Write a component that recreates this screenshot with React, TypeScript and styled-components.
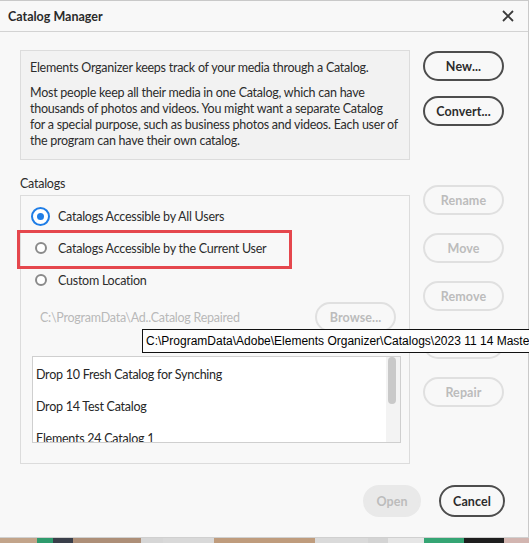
import React from "react";
import styled, { createGlobalStyle } from "styled-components";

const GlobalStyle = createGlobalStyle`
  html, body {
    margin: 0;
    padding: 0;
    overflow: hidden;
    background: #d4d4d4;
  }
  * {
    box-sizing: border-box;
  }
`;

const FONT = `Lato, "Open Sans", sans-serif`;

// Страница целиком
const Page = styled.div`
  position: relative;
  width: 529px;
  height: 543px;
  display: flex;
  flex-direction: column;
  overflow: hidden;
  font-family: ${FONT};
  font-size: 12.5px;
  letter-spacing: -0.25px;
  color: #2c2c2c;
`;

// Окно диалога
const Dialog = styled.div`
  height: 538px;
  background: #f8f8f8;
  border-top: 1px solid #c9c9c9;
  border-right: 1px solid #c9c9c9;
  border-bottom: 1px solid #d0d0d0;
  display: flex;
  flex-direction: column;
`;

const TitleBar = styled.div`
  height: 31px;
  flex: none;
  display: flex;
  align-items: center;
  justify-content: space-between;
  padding: 0 8px 0 8px;
  border-bottom: 1px solid #d3d3d3;
`;

const Title = styled.div`
  font-size: 12.5px;
  font-weight: 700;
  letter-spacing: 0;
  color: #2a2a2a;
`;

const CloseIcon = styled.svg`
  width: 12px;
  height: 12px;
  margin-right: 6px;
`;

const Body = styled.div`
  flex: 1;
  display: grid;
  grid-template-columns: 390px 81px;
  column-gap: 13px;
  padding: 18px 23px 0 20px;
`;

const LeftColumn = styled.div`
  display: flex;
  flex-direction: column;
`;

const RightColumn = styled.div`
  display: flex;
  flex-direction: column;
  padding-top: 1px;
`;

const InfoBox = styled.div`
  height: 110px;
  border: 1px solid #dcdcdc;
  background: #f2f2f2;
  padding: 9px 10px 0 9px;
  line-height: 16px;

  p {
    margin: 0 0 9px 0;
  }
`;

const SectionLabel = styled.div`
  margin-top: 16px;
  line-height: 16px;
`;

const GroupBox = styled.div`
  margin-top: 3px;
  height: 269px;
  border: 1px solid #dcdcdc;
  padding: 4px 9px 0 10px;
  display: flex;
  flex-direction: column;
`;

const RadioRow = styled.div`
  height: 32px;
  display: flex;
  align-items: center;
  gap: 8px;
`;

const RadioSlot = styled.div`
  width: 19px;
  display: flex;
  justify-content: center;
`;

const Radio = styled.span<{ $checked?: boolean }>`
  display: block;
  border-radius: 50%;
  background: #fff;
  ${({ $checked }) =>
    $checked
      ? `
    width: 19px;
    height: 19px;
    border: 2.5px solid #1f7de6;
    position: relative;
    &::after {
      content: "";
      position: absolute;
      left: 50%;
      top: 50%;
      width: 7px;
      height: 7px;
      margin: -3.5px 0 0 -3.5px;
      border-radius: 50%;
      background: #1f7de6;
    }
  `
      : `
    width: 12px;
    height: 12px;
    border: 2px solid #8a8a8a;
  `}
`;

// Красная рамка выделения
const Highlight = styled.div`
  position: absolute;
  left: 17px;
  top: 230px;
  width: 275px;
  height: 39px;
  border: 3px solid #e5474d;
  pointer-events: none;
`;

const PathRow = styled.div`
  margin-top: 6px;
  height: 30px;
  display: flex;
  align-items: center;
  justify-content: space-between;
  padding: 0 4px 0 9px;
`;

const PathText = styled.span`
  color: #b9b9b9;
`;

const Button = styled.button<{ $width?: number; $disabled?: boolean; $filled?: boolean }>`
  width: ${({ $width }) => $width ?? 81}px;
  height: ${({ $filled }) => ($filled ? 32 : 30)}px;
  flex: none;
  border-radius: 16px;
  font-family: ${FONT};
  font-size: 12.5px;
  font-weight: 700;
  letter-spacing: 0.1px;
  padding: 0;
  background: ${({ $filled }) => ($filled ? "#e9e9e9" : "transparent")};
  border: 2px solid
    ${({ $disabled, $filled }) =>
      $filled ? "#e9e9e9" : $disabled ? "#e0e0e0" : "#4d4d4d"};
  color: ${({ $disabled }) => ($disabled ? "#bcbcbc" : "#2c2c2c")};
`;

const ListBox = styled.div`
  margin: 24px 0 0 1px;
  width: 369px;
  height: 87px;
  background: #fff;
  border: 1px solid #cfcfcf;
  display: flex;
  overflow: hidden;
`;

const ListItems = styled.div`
  flex: 1;
  overflow: hidden;
  padding-top: 2px;
`;

const ListItem = styled.div`
  height: 32px;
  line-height: 32px;
  padding-left: 3px;
  color: #262626;
  white-space: nowrap;
`;

const ScrollTrack = styled.div`
  width: 14px;
  background: #f3f3f3;
  padding: 0 3px 0 2px;
`;

const ScrollThumb = styled.div`
  width: 8px;
  height: 47px;
  border-radius: 4px;
  background: #c9c9c9;
`;

const ActionStack = styled.div`
  display: flex;
  flex-direction: column;
  gap: 15px;
`;

const ManageStack = styled.div`
  margin-top: 59px;
  display: flex;
  flex-direction: column;
  gap: 18px;
`;

const Footer = styled.div`
  display: flex;
  justify-content: flex-end;
  gap: 18px;
  padding: 0 23px 20px 0;
`;

const Tooltip = styled.div`
  position: absolute;
  left: 142px;
  top: 329px;
  height: 24px;
  padding: 0 0 0 3px;
  border: 1px solid #111;
  background: #fdfdfd;
  font-family: "Liberation Sans", Arial, sans-serif;
  font-size: 12px;
  letter-spacing: 0;
  line-height: 22px;
  color: #000;
  white-space: nowrap;
`;

const PhotoStrip = styled.div`
  height: 5px;
  display: flex;
`;

const Swatch = styled.div<{ $w: number; $c: string }>`
  width: ${({ $w }) => $w}px;
  background: ${({ $c }) => $c};
`;

const strip: [number, string][] = [
  [37, "#c2a48a"],
  [16, "#2f9b6d"],
  [20, "#3a3f4a"],
  [68, "#ad8f78"],
  [22, "#d6d6d6"],
  [51, "#d9d9d9"],
  [101, "#bf9c7d"],
  [53, "#dadada"],
  [20, "#d4d4d4"],
  [36, "#e6e6e6"],
  [40, "#35a574"],
  [40, "#1e1e1e"],
  [25, "#d2b5b0"],
];

export default function App() {
  return (
    <>
      <GlobalStyle />
      <Page>
        <Dialog>
          <TitleBar>
            <Title>Catalog Manager</Title>
            <CloseIcon viewBox="0 0 12 12">
              <path d="M1 1L11 11M11 1L1 11" stroke="#3a3a3a" strokeWidth="1.8" />
            </CloseIcon>
          </TitleBar>
          <Body>
            <LeftColumn>
              <InfoBox>
                <p>Elements Organizer keeps track of your media through a Catalog.</p>
                <p>
                  Most people keep all their media in one Catalog, which can have
                  thousands of photos and videos. You might want a separate Catalog
                  for a special purpose, such as business photos and videos. Each user of
                  the program can have their own catalog.
                </p>
              </InfoBox>
              <SectionLabel>Catalogs</SectionLabel>
              <GroupBox>
                <RadioRow>
                  <RadioSlot>
                    <Radio $checked />
                  </RadioSlot>
                  Catalogs Accessible by All Users
                </RadioRow>
                <RadioRow>
                  <RadioSlot>
                    <Radio />
                  </RadioSlot>
                  Catalogs Accessible by the Current User
                </RadioRow>
                <RadioRow>
                  <RadioSlot>
                    <Radio />
                  </RadioSlot>
                  Custom Location
                </RadioRow>
                <PathRow>
                  <PathText>C:\ProgramData\Ad..Catalog Repaired</PathText>
                  <Button $disabled>Browse...</Button>
                </PathRow>
                <ListBox>
                  <ListItems>
                    <ListItem>Drop 10 Fresh Catalog for Synching</ListItem>
                    <ListItem>Drop 14 Test Catalog</ListItem>
                    <ListItem>Elements 24 Catalog 1</ListItem>
                  </ListItems>
                  <ScrollTrack>
                    <ScrollThumb />
                  </ScrollTrack>
                </ListBox>
              </GroupBox>
            </LeftColumn>
            <RightColumn>
              <ActionStack>
                <Button>New...</Button>
                <Button>Convert...</Button>
              </ActionStack>
              <ManageStack>
                <Button $disabled>Rename</Button>
                <Button $disabled>Move</Button>
                <Button $disabled>Remove</Button>
                <Button $disabled>Optimize</Button>
                <Button $disabled>Repair</Button>
              </ManageStack>
            </RightColumn>
          </Body>
          <Footer>
            <Button $filled $disabled $width={58}>
              Open
            </Button>
            <Button $width={66} style={{ height: 32 }}>
              Cancel
            </Button>
          </Footer>
        </Dialog>
        <PhotoStrip>
          {strip.map(([w, c], i) => (
            <Swatch key={i} $w={w} $c={c} />
          ))}
        </PhotoStrip>
        <Highlight />
        <Tooltip>C:\ProgramData\Adobe\Elements Organizer\Catalogs\2023 11 14 Master Catalog</Tooltip>
      </Page>
    </>
  );
}
